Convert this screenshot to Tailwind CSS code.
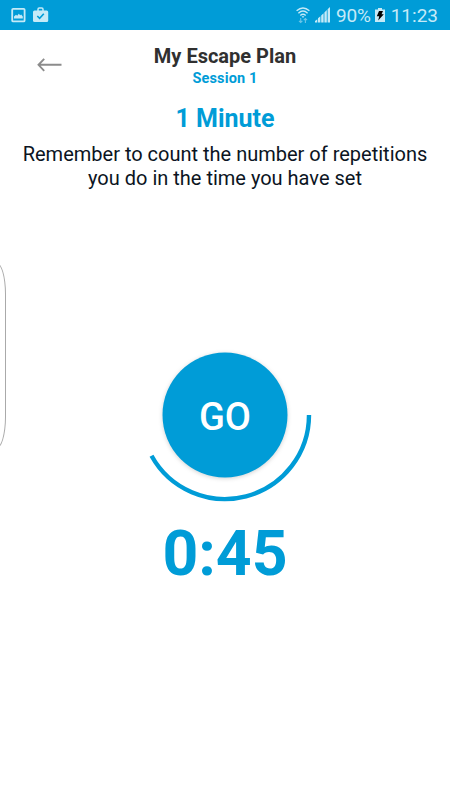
<!DOCTYPE html>
<html lang="en">
  <head>
    <meta charset="UTF-8" />
    <meta name="viewport" content="width=device-width, initial-scale=1.0" />
    <title>My Escape Plan</title>
    <script src="https://cdn.jsdelivr.net/npm/@tailwindcss/browser@4"></script>
  </head>
  <body class="bg-white font-[Roboto,sans-serif]">
    <div class="relative flex flex-col w-[450px] h-[800px] overflow-hidden">
      <!-- status bar -->
      <div class="flex items-center justify-between h-[30px] shrink-0 bg-[#009cd7] pl-[11px] pr-3 text-[#c5eaf7]">
        <div class="flex items-center gap-[7px]">
          <svg class="w-[15px] h-4" viewBox="0 0 15 16" fill="none">
            <rect x="1.2" y="1.8" width="12.4" height="12.6" rx="1" stroke="currentColor" stroke-width="1.8" />
            <path d="M3 11.5V9.5L5 7.8l1.2 1 1.6-2 1.4 1.4 1-.7 1.6 2v2z" fill="currentColor" />
          </svg>
          <svg class="w-4 h-4" viewBox="0 0 16 16" fill="none">
            <path d="M5 4V2.2Q5 1 6.2 1h2.6Q10 1 10 2.2V4" stroke="currentColor" stroke-width="1.5" />
            <rect x="0" y="3.5" width="15.2" height="11.5" rx="1.5" fill="currentColor" />
            <path d="M4.3 9l2.3 2.3 4.2-4.6" stroke="#009cd7" stroke-width="1.6" />
          </svg>
        </div>
        <div class="flex items-center">
          <svg class="w-[14px] h-[18px] mr-[5px]" viewBox="0 0 14 18" fill="none">
            <g stroke="currentColor" stroke-width="1.4">
              <path d="M.6 4.7Q7-.8 13.4 4.7" />
              <path d="M2.4 7.2Q7 3 11.6 7.2" />
              <path d="M4.3 9.4Q7 7 9.7 9.4" />
            </g>
            <path d="M5.6 10.2h2.8L7 12z" fill="currentColor" />
            <g stroke="#6cc5e8" stroke-width="1.1">
              <path d="M4.7 12v4.5M3 14.8l1.7 1.7 1.7-1.7M9.4 17v-4.5M7.7 14.2l1.7-1.7 1.7 1.7" />
            </g>
          </svg>
          <svg class="w-4 h-4 mr-[5px]" viewBox="0 0 16 16" fill="currentColor">
            <path d="M0 15.5V14l2.3-1.8v3.3zM3 15.5v-4.2l2.4-2v6.2zM6.2 15.5V8.4l2.4-2.2v9.3zM9.4 15.5V5.4L11.8 3v12.5zM12.6 15.5V2.3L15 0v15.5z" />
          </svg>
          <span class="text-[19px] leading-[30px] tracking-[-0.2px] pt-0.5">90%</span>
          <svg class="w-[10px] h-4 ml-[4px] mr-[6px]" viewBox="0 0 10 16">
            <path d="M3 1h4v1.5h3V15H0V2.5h3z" fill="currentColor" />
            <path d="M4 4h4L6.5 7.2h2.3L3.2 13.5l1-4.3H1.8z" fill="#000" />
          </svg>
          <span class="text-[19px] leading-[30px] pt-0.5">11:23</span>
        </div>
      </div>

      <!-- header -->
      <div class="grid grid-cols-[75px_300px_75px] pt-[14px]">
        <svg class="w-[26px] h-4 ml-[37px] mt-[13px]" viewBox="0 0 26 16" fill="none" stroke="#8c8c8c" stroke-width="1.9">
          <path d="M24.5 7.8H1.5M7.2 1.8L1.5 7.8l5.7 6" />
        </svg>
        <div class="text-center">
          <h1 class="text-[20px] leading-6 font-bold text-[#303030]">My Escape Plan</h1>
          <p class="text-[14.5px] leading-[22px] tracking-[0.15px] font-bold text-[#009cd7]">Session 1</p>
        </div>
      </div>

      <!-- exercise info -->
      <div class="text-center pt-[14px]">
        <h2 class="text-[25px] leading-[30px] font-bold text-[#009cd7]">1 Minute</h2>
        <p class="text-[20px] leading-6 pt-2 text-[#0b1422]">
          Remember to count the number of repetitions<br />
          you do in the time you have set
        </p>
      </div>

      <!-- timer -->
      <div class="flex flex-col items-center pt-[135px]">
        <svg class="w-[180px] h-[180px]" viewBox="0 0 180 180">
          <circle class="drop-shadow-[0_1px_2px_rgba(0,0,0,0.18)]" cx="90" cy="90" r="62.5" fill="#009cd7" />
          <path d="M174 90A84 84 0 0 1 16.5 130.7" fill="none" stroke="#009cd7" stroke-width="4.4" />
          <text class="text-[38px] font-medium" x="90" y="105" text-anchor="middle" fill="#fff">GO</text>
        </svg>
        <div class="text-[62.5px] leading-[72px] font-bold text-[#009cd7] mt-[13px]">0:45</div>
      </div>

      <!-- edge panel handle -->
      <div class="absolute -left-[14px] top-[262px] w-5 h-[187px] border border-[#aaa] rounded-[10px/32px]"></div>
    </div>
  </body>
</html>
